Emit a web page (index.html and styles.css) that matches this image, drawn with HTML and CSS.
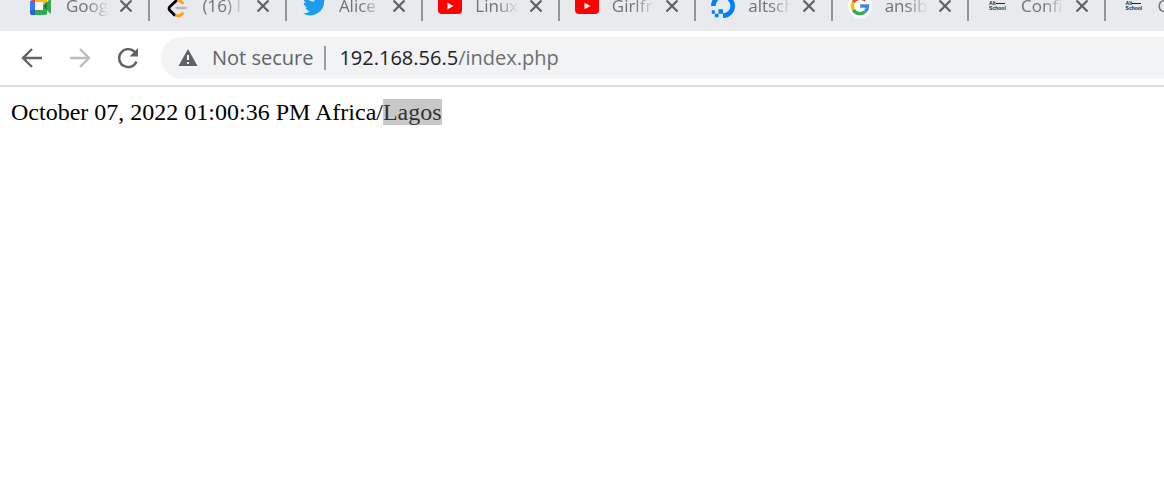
FILE: index.html
```html
<!DOCTYPE html>
<html lang="en">
<head>
<meta charset="utf-8">
<title>192.168.56.5/index.php</title>
<link rel="stylesheet" href="styles.css">
</head>
<body>
<svg class="sprite">
  <symbol id="close" viewBox="0 0 14 14"><path d="M1.500 1.500l11 11M12.500 1.500l-11 11" stroke="currentColor" stroke-width="2.200" fill="none"/></symbol>
  <symbol id="youtube" viewBox="0 0 24 24"><rect y="3" width="24" height="17" rx="4" fill="#f00"/><path d="M9.500 8.700v6.600l6-3.300z" fill="#fff"/></symbol>
</svg>
<header class="browser">
  <nav class="strip" aria-label="Tabs">
    <ul class="tabs">
      <li class="tab">
        <svg class="icon" viewBox="0 0 24 24"><path d="M1 8L6 2v6z" fill="#ea4335"/><path d="M1 7h5v9H1z" fill="#3b78f0"/><path d="M1 16h5v5H3a2 2 0 0 1-2-2z" fill="#1a67d8"/><path d="M6 2h10a2 2 0 0 1 2 2v5l-4 3V8H6z" fill="#ffba00"/><path d="M6 16h8v-4l4 3v4a2 2 0 0 1-2 2H6z" fill="#34a853"/><path d="M6 8h8v8H6z" fill="#f4f6fa"/><path d="M14 12l7-7q1-.6 1 .6v13q0 1.200-1 .6z" fill="#34a853"/><path d="M14 12l4-4v8z" fill="#188038"/></svg>
        <span class="title">Goog</span>
        <button class="close" aria-label="Close tab"><svg><use href="#close"/></svg></button>
      </li>
      <li class="tab">
        <svg class="icon" viewBox="0 0 24 24" fill="none" stroke-width="2.800" stroke-linecap="round"><path d="M11.500 6.500L5 12.500q-2 1.800 0 4l4.500 4.500" stroke="#000"/><path d="M13.500 6.500q2 .5 4 2.500M11.500 21.500q3.500 1 6-2" stroke="#ffa116"/><path d="M11.500 14h9.500" stroke="#b8b8b8" stroke-width="2.300"/></svg>
        <span class="title">(16) I</span>
        <button class="close" aria-label="Close tab"><svg><use href="#close"/></svg></button>
      </li>
      <li class="tab">
        <svg class="icon" viewBox="-1 1 24 24"><path fill="#1d9bf0" d="M23.600 4.900a10 10 0 0 1-2.800.8 4.900 4.900 0 0 0 2.200-2.700 10 10 0 0 1-3.100 1.200 4.900 4.900 0 0 0-8.400 4.500A14 14 0 0 1 1.400 3.500a4.900 4.900 0 0 0 1.500 6.600 5 5 0 0 1-2.200-.6c-.1 2.300 1.600 4.400 3.900 4.900a5 5 0 0 1-2.200.1 4.900 4.900 0 0 0 4.600 3.400A10 10 0 0 1 0 20.500a14 14 0 0 0 21.100-13 10 10 0 0 0 2.500-2.600z"/></svg>
        <span class="title">Alice</span>
        <button class="close" aria-label="Close tab"><svg><use href="#close"/></svg></button>
      </li>
      <li class="tab">
        <svg class="icon"><use href="#youtube"/></svg>
        <span class="title">Linux</span>
        <button class="close" aria-label="Close tab"><svg><use href="#close"/></svg></button>
      </li>
      <li class="tab">
        <svg class="icon"><use href="#youtube"/></svg>
        <span class="title">Girlfr</span>
        <button class="close" aria-label="Close tab"><svg><use href="#close"/></svg></button>
      </li>
      <li class="tab">
        <svg class="icon" viewBox="0 0 24 24" fill="#0080ff"><path d="M12 24v-4.700A7.400 7.400 0 1 0 4.600 12H0A12 12 0 1 1 12 24z"/><path d="M7.500 15.200H12v4.500H7.500zM3.800 19.700h3.700v3.600H3.800zM.8 16.200h3v3.500h-3z"/></svg>
        <span class="title">altsch</span>
        <button class="close" aria-label="Close tab"><svg><use href="#close"/></svg></button>
      </li>
      <li class="tab">
        <svg class="icon" viewBox="0 0 24 24" fill="none" stroke-width="3.400"><circle cx="12" cy="12" r="12" fill="#fff"/><path d="M17.500 6.500A7.600 7.600 0 0 0 5.400 8.200" stroke="#ea4335"/><path d="M5.400 8.200a7.600 7.600 0 0 0 0 7.600" stroke="#fbbc05"/><path d="M5.400 15.800a7.600 7.600 0 0 0 11.500 2" stroke="#34a853"/><path d="M16.900 17.800q2.500-2.200 2.600-5.800h-7.300" stroke="#4285f4"/></svg>
        <span class="title">ansib</span>
        <button class="close" aria-label="Close tab"><svg><use href="#close"/></svg></button>
      </li>
      <li class="tab">
        <span class="icon school"><span class="alt">Alt</span><span>School</span></span>
        <span class="title">Confi</span>
        <button class="close" aria-label="Close tab"><svg><use href="#close"/></svg></button>
      </li>
      <li class="tab">
        <span class="icon school"><span class="alt">Alt</span><span>School</span></span>
        <span class="title">C</span>
        <button class="close" aria-label="Close tab"><svg><use href="#close"/></svg></button>
      </li>
    </ul>
  </nav>
  <div class="toolbar">
    <button class="tool" aria-label="Back"><svg viewBox="0 0 24 24"><path d="M22 12H3M12 3l-9 9 9 9"/></svg></button>
    <button class="tool off" aria-label="Forward" disabled><svg viewBox="0 0 24 24"><path d="M2 12h19M12 3l9 9-9 9"/></svg></button>
    <button class="tool" aria-label="Reload"><svg viewBox="0 0 24 24"><path d="M20.500 15.500A9 9 0 1 1 18.800 6"/><path d="M22 2v8.500h-8.500z" class="solid"/></svg></button>
    <div class="address">
      <button class="security"><svg viewBox="0 0 20 20"><path d="M10 1l9.500 17H.5z" fill="#5f6368"/><path d="M10 7v5M10 14v2" stroke="#f1f3f4" stroke-width="2"/></svg>Not secure</button>
      <div class="url" role="textbox" contenteditable="true" spellcheck="false" aria-label="Address">192.168.56.5<span class="path">/index.php</span></div>
    </div>
  </div>
</header>
<main class="page">October 07, 2022 01:00:36 PM Africa/<mark class="selected">Lagos</mark></main>
</body>
</html>
```
FILE: styles.css
```css
* {
  box-sizing: border-box;
}

body {
  margin: 0;
  background: #fff;
  overflow-x: hidden;
}

button {
  border: 0;
  padding: 0;
  background: none;
  font: inherit;
  color: inherit;
}

.sprite {
  display: none;
}

.browser {
  font-family: "Open Sans", "Noto Sans", sans-serif;
  color: #5f6368;
  border-bottom: 2px solid #dadbdc;
  overflow: hidden;
}

.strip {
  margin-top: -20px;
  padding-left: 14px;
  background: #e8eaed;
  overflow: hidden;
}

/* The last tab runs past the window's right edge. */
.tabs {
  display: grid;
  grid-template-columns: repeat(9, minmax(0, 1fr));
  align-items: center;
  height: 51px;
  margin: 0 -78px 0 0;
  padding: 0;
  list-style: none;
}

.tab {
  display: flex;
  align-items: center;
  height: 30px;
  padding: 0 15px;
  border-right: 2px solid #929497;
}

.icon {
  flex: none;
  width: 24px;
  height: 24px;
}

.title {
  flex: 1;
  min-width: 0;
  margin: 0 10px 0 13px;
  font-size: 17px;
  line-height: 24px;
  color: #6f7276;
  white-space: nowrap;
  mask-image: linear-gradient(to right, #000 50%, transparent);
}

.close {
  flex: none;
  width: 14px;
  height: 14px;
}

.close svg {
  display: block;
  width: 14px;
  height: 14px;
}

.school {
  display: flex;
  flex-direction: column;
  justify-content: center;
  padding-left: 5px;
  font: bold 5px/5px "Liberation Sans", sans-serif;
  color: #222;
}

.alt {
  display: flex;
  align-items: center;
}

.alt::after {
  content: "";
  width: 9px;
  height: 1px;
  background: #222;
}

.toolbar {
  display: flex;
  align-items: center;
  gap: 24px;
  padding: 6px 0 6px 20px;
  background: #fff;
}

.tool svg {
  display: block;
  width: 24px;
  height: 24px;
  fill: none;
  stroke: #5f6368;
  stroke-width: 2.4;
}

.tool .solid {
  fill: #5f6368;
  stroke: none;
}

.off svg {
  stroke: #babcbe;
}

.address {
  flex: 1;
  display: flex;
  align-items: center;
  height: 42px;
  margin-left: -3px;
  margin-right: -24px;
  padding-left: 17px;
  border-radius: 21px;
  background: #f1f3f4;
  font-size: 20px;
  line-height: 24px;
}

.security {
  display: flex;
  align-items: center;
  gap: 14px;
  padding-right: 11px;
  border-right: 2px solid #9a9c9f;
}

.security svg {
  width: 20px;
  height: 20px;
}

.url {
  padding-left: 13px;
  color: #202124;
  white-space: nowrap;
}

.path {
  color: #6b6f73;
}

.page {
  padding: 12px 11px;
  font: 24px/27px "Liberation Serif", "Times New Roman", serif;
  color: #000;
}

.selected {
  background: #c8c8c8;
  color: #323232;
}
```
